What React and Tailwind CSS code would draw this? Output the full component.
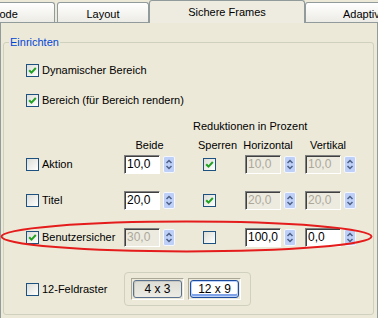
const Check = ({ checked }) => (
  <span className="flex h-[13px] w-[13px] shrink-0 items-center justify-center border border-[#1C5180] bg-linear-to-br from-[#DCDCD7] to-white">
    {checked && (
      <svg width="11" height="11" viewBox="0 0 11 11">
        <path d="M2.2 5.2l2.3 2.4l4.3-4.6" fill="none" stroke="#21A121" strokeWidth="2" />
      </svg>
    )}
  </span>
);

const Spin = () => (
  <svg width="12" height="17" viewBox="0 0 12 17" className="ml-[3px] shrink-0">
    <rect x="0.5" y="0.5" width="11" height="16" rx="1.5" fill="#BFD0F8" stroke="#F4F7FE" />
    <path d="M3.5 7l2.5-2.5l2.5 2.5" fill="none" stroke="#4D6185" strokeWidth="1.5" />
    <path d="M3.5 10l2.5 2.5l2.5-2.5" fill="none" stroke="#4D6185" strokeWidth="1.5" />
  </svg>
);

const Field = ({ value, disabled }) => (
  <div
    className={
      "flex h-[19px] w-[36px] shrink-0 items-center border border-t-[#808080] border-l-[#808080] border-r-white border-b-white pl-[2px] text-[12px] shadow-[inset_1px_1px_0_#404040] " +
      (disabled ? "bg-[#EDEBE0] text-[#ACA899]" : "bg-white text-black")
    }
  >
    {value}
  </div>
);

const SpinField = ({ value, disabled }) => (
  <div className="flex items-center">
    <Field value={value} disabled={disabled} />
    <Spin />
  </div>
);

const DataRow = ({ label, checked, beide, beideOff, lock, hor, horOff, ver, verOff, className }) => (
  <div className={"flex h-[20px] items-center pl-[22px] " + className}>
    <div className="flex w-[98px] items-center">
      <Check checked={checked} />
      <span className="ml-[3px]">{label}</span>
    </div>
    <div className="w-[51px]">
      <SpinField value={beide} disabled={beideOff} />
    </div>
    <div className="w-[70px] pl-[28px]">
      <Check checked={lock} />
    </div>
    <div className="w-[60px]">
      <SpinField value={hor} disabled={horOff} />
    </div>
    <SpinField value={ver} disabled={verOff} />
  </div>
);

export default function App() {
  return (
    <div className="relative h-[318px] w-[378px] overflow-hidden bg-[#ECE9D8] font-['Liberation_Sans',Arial,sans-serif] text-[11px] leading-[13px] text-black">
      {/* Tabs */}
      <div className="flex h-[22px] items-end">
        <div className="ml-[-47px] flex h-[20px] w-[102px] shrink-0 items-center justify-center rounded-t-[3px] border border-b-0 border-[#919B9C] bg-linear-to-b from-white to-[#ECEBE5] pt-[3px]">
          Mode
        </div>
        <div className="ml-[2px] flex h-[20px] w-[92px] shrink-0 items-center justify-center rounded-t-[3px] border border-b-0 border-[#919B9C] bg-linear-to-b from-white to-[#ECEBE5] pt-[3px]">
          Layout
        </div>
        <div className="relative z-10 mb-[-1px] flex h-[23px] w-[156px] shrink-0 items-center justify-center rounded-t-[3px] border border-b-0 border-[#919B9C] bg-[#EEECE1]">
          Sichere Frames
        </div>
        <div className="flex h-[20px] w-[130px] shrink-0 items-center rounded-t-[3px] border border-b-0 border-[#919B9C] bg-linear-to-b from-white to-[#ECEBE5] pl-[37px] pt-[3px]">
          Adaptive
        </div>
      </div>

      {/* Panel */}
      <div className="h-[296px] border-x border-t border-[#919B9C]">
        <div className="relative ml-[2px] mt-[19px] h-[273px] w-[371px] rounded-[3px] border border-[#D0D0BF] pt-[14px]">
          <span className="absolute left-[5px] top-[-7px] bg-[#ECE9D8] px-[1px] text-[#0046D5]">Einrichten</span>

          <div className="flex h-[26px] items-center pl-[22px]">
            <Check checked />
            <span className="ml-[3px]">Dynamischer Bereich</span>
          </div>
          <div className="mt-[4px] flex h-[26px] items-center pl-[22px]">
            <Check checked />
            <span className="ml-[3px]">Bereich (für Bereich rendern)</span>
          </div>

          <div className="mt-[6px] flex h-[14px] items-center pl-[189px]">Reduktionen in Prozent</div>

          <div className="mt-[5px] flex h-[14px] items-center pl-[22px]">
            <div className="w-[98px]" />
            <div className="flex w-[51px] justify-center">Beide</div>
            <div className="ml-[22px] flex w-[41px] justify-center">Sperren</div>
            <div className="flex w-[60px] justify-center">Horizontal</div>
            <div className="flex w-[60px] justify-center">Vertikal</div>
          </div>

          <DataRow className="mt-[2px]" label="Aktion" beide="10,0" lock hor="10,0" horOff ver="10,0" verOff />
          <DataRow className="mt-[16px]" label="Titel" beide="20,0" lock hor="20,0" horOff ver="20,0" verOff />
          <DataRow className="mt-[17px]" label="Benutzersicher" checked beide="30,0" beideOff hor="100,0" ver="0,0" />

          <div className="mt-[25px] flex h-[34px] items-center pl-[22px]">
            <div className="flex w-[98px] items-center">
              <Check />
              <span className="ml-[3px]">12-Feldraster</span>
            </div>
            <div className="flex h-[34px] w-[127px] items-center gap-[4px] rounded-[4px] border border-[#D0D0BF] pl-[6px]">
              <div className="h-[22px] w-[53px] border border-t-[#ACA899] border-l-[#ACA899] border-r-white border-b-white p-[1px]">
                <div className="flex h-full w-full items-center justify-center rounded-[3px] border border-[#5A7290] bg-linear-to-b from-[#DEDDD5] to-[#EBEAE4] text-[12px] shadow-[inset_1px_1px_0_#C9C8C0]">
                  4 x 3
                </div>
              </div>
              <div className="h-[22px] w-[53px] border border-t-[#ACA899] border-l-[#ACA899] border-r-white border-b-white p-[1px]">
                <div className="flex h-full w-full items-center justify-center rounded-[3px] border border-[#1D4C9E] bg-white text-[12px] shadow-[inset_0_0_0_1px_#BCD2F8,inset_0_-2px_0_1px_#7FA3E6]">
                  12 x 9
                </div>
              </div>
            </div>
          </div>
        </div>
      </div>

      {/* Red highlight */}
      <svg className="pointer-events-none absolute left-0 top-0" width="378" height="318">
        <ellipse cx="186.5" cy="236.5" rx="185" ry="15" fill="none" stroke="#E51C1C" strokeWidth="2" />
      </svg>
    </div>
  );
}
